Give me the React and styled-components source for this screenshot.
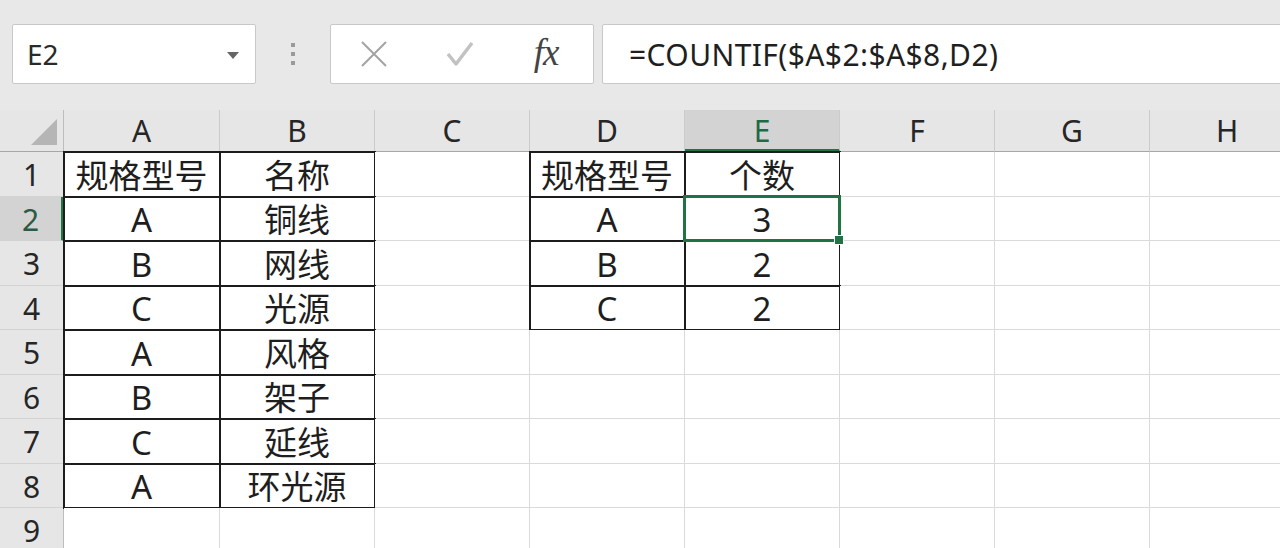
import styled, { createGlobalStyle } from "styled-components";

const GlobalStyle = createGlobalStyle`
  html, body {
    margin: 0;
    padding: 0;
    background: #e8e8e8;
    overflow: hidden;
  }
  body {
    font-family: "Noto Sans", "Noto Sans CJK SC", sans-serif;
    color: #222;
  }
`;

const Page = styled.div`
  width: 1280px;
  height: 548px;
  overflow: hidden;
  background: #fff;
`;

const Toolbar = styled.div`
  height: 110px;
  box-sizing: border-box;
  padding: 24px 0 0 12px;
  background: #e8e8e8;
  display: flex;
  align-items: flex-start;
`;

const Box = styled.div`
  height: 60px;
  box-sizing: border-box;
  background: #fff;
  border: 1px solid #c8c8c8;
  border-radius: 2px;
  display: flex;
  align-items: center;
`;

const NameBox = styled(Box)`
  width: 244px;
  padding: 0 16px 0 14px;
  justify-content: space-between;
  font-size: 28px;
  color: #2a2a2a;
`;

const Caret = styled.span`
  width: 0;
  height: 0;
  border-left: 6px solid transparent;
  border-right: 6px solid transparent;
  border-top: 7px solid #666;
  margin-top: 2px;
`;

const Dots = styled.div`
  width: 74px;
  height: 60px;
  display: flex;
  flex-direction: column;
  align-items: center;
  justify-content: center;
  gap: 5px;
  & span {
    width: 4px;
    height: 4px;
    background: #9a9a9a;
  }
`;

const FuncBox = styled(Box)`
  width: 264px;
  padding-left: 28px;
  gap: 56px;
`;

const IconSlot = styled.div`
  width: 30px;
  display: flex;
  justify-content: center;
  align-items: center;
`;

const Fx = styled.span`
  font-family: "Liberation Serif", "DejaVu Serif", serif;
  font-style: italic;
  font-size: 37px;
  line-height: 1;
  color: #444;
  letter-spacing: -1px;
  margin-top: -4px;
`;

const FormulaBox = styled(Box)`
  flex: 1;
  margin-left: 8px;
  margin-right: -10px;
  padding-left: 26px;
  font-size: 30px;
  letter-spacing: 0.4px;
  color: #1f1f1f;
`;

const Sheet = styled.div`
  display: grid;
  grid-template-columns: 64px 156px repeat(7, 155px);
  grid-template-rows: 42px repeat(9, 44.5px);
`;

const Corner = styled.div`
  background: #e6e6e6;
  border-right: 1px solid #bdbdbd;
  border-bottom: 1px solid #a6a6a6;
  box-sizing: border-box;
  display: flex;
  align-items: flex-end;
  justify-content: flex-end;
  padding: 0 6px 6px 0;
  & span {
    width: 0;
    height: 0;
    border-left: 26px solid transparent;
    border-bottom: 26px solid #b5b5b5;
  }
`;

const ColHead = styled.div`
  background: ${(p) => (p.$active ? "#d3d3d3" : "#e6e6e6")};
  color: ${(p) => (p.$active ? "#1e6b47" : "#262626")};
  border-right: 1px solid #cbcbcb;
  border-bottom: ${(p) => (p.$active ? "3px solid #217346" : "1px solid #a6a6a6")};
  box-sizing: border-box;
  display: flex;
  align-items: center;
  justify-content: center;
  font-size: 30px;
  padding-top: ${(p) => (p.$active ? "2px" : "0")};
`;

const RowHead = styled.div`
  background: ${(p) => (p.$active ? "#d3d3d3" : "#e6e6e6")};
  color: ${(p) => (p.$active ? "#2d5a44" : "#262626")};
  border-right: ${(p) => (p.$active ? "3px solid #217346" : "1px solid #bdbdbd")};
  border-bottom: 1px solid #d2d2d2;
  box-sizing: border-box;
  display: flex;
  align-items: center;
  justify-content: center;
  font-size: 30px;
  padding-top: 2px;
`;

const Cell = styled.div`
  position: relative;
  background: #fff;
  border-right: 1px solid #dadada;
  border-bottom: 1px solid #dadada;
  box-sizing: border-box;
  display: flex;
  align-items: center;
  justify-content: center;
  font-size: 33px;
  line-height: 1;
  padding-top: 3px;
  color: #1e1e1e;
  outline: ${(p) => (p.$boxed ? "2px solid #1c1c1c" : "none")};
  outline-offset: -1px;
`;

const Selection = styled.div`
  position: absolute;
  left: -2px;
  top: -2px;
  right: -2px;
  bottom: -2px;
  border: 3px solid #217346;
  z-index: 2;
  &::after {
    content: "";
    position: absolute;
    right: -6px;
    bottom: -6px;
    width: 8px;
    height: 8px;
    background: #217346;
    border: 1px solid #fff;
  }
`;

const cols = ["A", "B", "C", "D", "E", "F", "G", "H"];

const left = [
  ["规格型号", "名称"],
  ["A", "铜线"],
  ["B", "网线"],
  ["C", "光源"],
  ["A", "风格"],
  ["B", "架子"],
  ["C", "延线"],
  ["A", "环光源"],
];

const right = [
  ["规格型号", "个数"],
  ["A", "3"],
  ["B", "2"],
  ["C", "2"],
];

function cellValue(r, c) {
  if (c <= 1 && left[r]) return left[r][c];
  if ((c === 3 || c === 4) && right[r]) return right[r][c - 3];
  return null;
}

const XIcon = () => (
  <svg width="30" height="30" viewBox="0 0 30 30">
    <path d="M3 3 L27 27 M27 3 L3 27" stroke="#a3a3a3" strokeWidth="2" fill="none" />
  </svg>
);

const CheckIcon = () => (
  <svg width="30" height="30" viewBox="0 0 30 30">
    <path d="M3 15 L11 25 L27 4" stroke="#c2c2c2" strokeWidth="3.5" fill="none" strokeLinejoin="round" />
  </svg>
);

export default function App() {
  return (
    <Page>
      <GlobalStyle />
      <Toolbar>
        <NameBox>
          E2
          <Caret />
        </NameBox>
        <Dots>
          <span />
          <span />
          <span />
        </Dots>
        <FuncBox>
          <IconSlot>
            <XIcon />
          </IconSlot>
          <IconSlot>
            <CheckIcon />
          </IconSlot>
          <IconSlot>
            <Fx>fx</Fx>
          </IconSlot>
        </FuncBox>
        <FormulaBox>=COUNTIF($A$2:$A$8,D2)</FormulaBox>
      </Toolbar>
      <Sheet>
        <Corner>
          <span />
        </Corner>
        {cols.map((c) => (
          <ColHead key={c} $active={c === "E"}>
            {c}
          </ColHead>
        ))}
        {Array.from({ length: 9 }, (_, r) => [
          <RowHead key={`h${r}`} $active={r === 1}>
            {r + 1}
          </RowHead>,
          ...cols.map((_, c) => {
            const v = cellValue(r, c);
            return (
              <Cell key={`${r}-${c}`} $boxed={v !== null}>
                {v}
                {r === 1 && c === 4 && <Selection />}
              </Cell>
            );
          }),
        ])}
      </Sheet>
    </Page>
  );
}
